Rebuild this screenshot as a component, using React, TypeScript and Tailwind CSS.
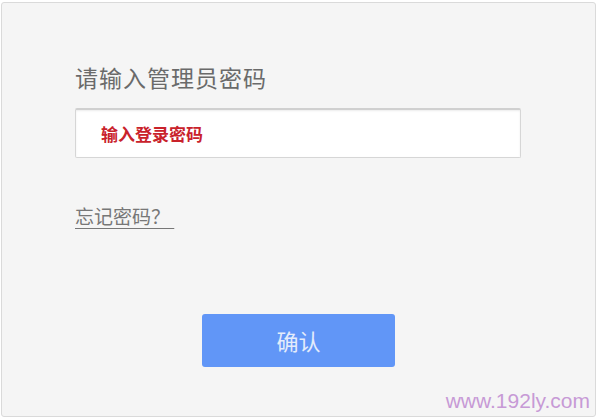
const App = () => {
  return (
    <div
      className="w-[600px] h-[420px] bg-white pt-[2px] pl-[1px] pr-[4px] pb-[3px]"
      style={{ fontFamily: '"Noto Sans CJK SC", "Noto Sans", sans-serif' }}
    >
      <div className="relative flex flex-col h-full rounded-[3px] border border-[#dadada] bg-[#f5f5f5] pl-[73px] pt-[59px]">
        <div className="text-[23px] leading-[30px] tracking-[1px] text-[#6a6a6a]">
          请输入管理员密码
        </div>
        <div className="mt-[16px] flex items-center w-[446px] h-[50px] rounded-[2px] border border-[#d6d6d6] border-t-2 border-t-[#d0d0d0] bg-white pl-[25px] shadow-[inset_0_1px_2px_rgba(0,0,0,0.08)]">
          <span className="text-[17px] font-bold leading-[20px] text-[#c9222b]">
            输入登录密码
          </span>
        </div>
        <div className="mt-[46px]">
          <a
            href="#"
            className="text-[19px] leading-[24px] text-[#777777] underline underline-offset-[4px] decoration-[#777777]"
          >
            忘记密码？&nbsp;
          </a>
        </div>
        <div className="mt-[85px] pl-[127px]">
          <button className="flex items-center justify-center w-[193px] h-[53px] rounded-[3px] bg-[#6196f7] text-[22px] text-[#e4ecfb]">
            确认
          </button>
        </div>
        <div
          className="absolute right-[5px] bottom-[4px] text-[21px] leading-[22px] text-[#c79ad6]"
          style={{ fontFamily: '"Liberation Sans", Arial, sans-serif' }}
        >
          www.192ly.com
        </div>
      </div>
    </div>
  )
}

export default App
